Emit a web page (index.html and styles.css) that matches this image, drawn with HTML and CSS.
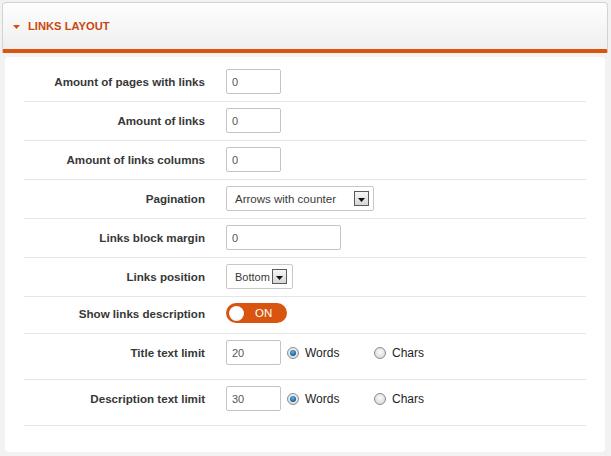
FILE: index.html
```html
<!DOCTYPE html>
<html>
<head>
<meta charset="utf-8">
<link rel="stylesheet" href="styles.css">
</head>
<body>
<div class="header">
  <svg class="caret" width="7" height="4" viewBox="0 0 7 4"><polygon points="0,0 7,0 3.5,4" fill="#d4500f"/></svg>
  <span class="title">LINKS LAYOUT</span>
</div>
<div class="panel">
  <div class="row">
    <label class="lbl">Amount of pages with links</label>
    <div class="input w55">0</div>
  </div>
  <div class="row">
    <label class="lbl">Amount of links</label>
    <div class="input w55">0</div>
  </div>
  <div class="row">
    <label class="lbl">Amount of links columns</label>
    <div class="input w55">0</div>
  </div>
  <div class="row">
    <label class="lbl">Pagination</label>
    <div class="select w148"><span class="sel-text">Arrows with counter</span><span class="sel-btn"><svg width="7" height="4" viewBox="0 0 7 4"><polygon points="0,0 7,0 3.5,4" fill="#111"/></svg></span></div>
  </div>
  <div class="row">
    <label class="lbl">Links block margin</label>
    <div class="input w115">0</div>
  </div>
  <div class="row">
    <label class="lbl">Links position</label>
    <div class="select w67"><span class="sel-text">Bottom</span><span class="sel-btn"><svg width="7" height="4" viewBox="0 0 7 4"><polygon points="0,0 7,0 3.5,4" fill="#111"/></svg></span></div>
  </div>
  <div class="row row-toggle">
    <label class="lbl">Show links description</label>
    <div class="toggle"><span class="knob"></span><span class="on">ON</span></div>
  </div>
  <div class="row row-radio">
    <label class="lbl">Title text limit</label>
    <div class="input w55">20</div>
    <div class="radio-group first"><span class="radio checked"></span><span class="rtext">Words</span></div>
    <div class="radio-group"><span class="radio"></span><span class="rtext">Chars</span></div>
  </div>
  <div class="row row-radio">
    <label class="lbl">Description text limit</label>
    <div class="input w55">30</div>
    <div class="radio-group first"><span class="radio checked"></span><span class="rtext">Words</span></div>
    <div class="radio-group"><span class="radio"></span><span class="rtext">Chars</span></div>
  </div>
</div>
</body>
</html>
```
FILE: styles.css
```css
* { box-sizing: border-box; }
body {
  margin: 0;
  background: #f2f2f2;
  font-family: "Liberation Sans", Arial, sans-serif;
  width: 611px;
  height: 456px;
  overflow: hidden;
}
.header {
  margin: 2px 3px 0 2px;
  height: 51px;
  border: 1px solid #d3d3d3;
  border-bottom: 4px solid #d9540e;
  border-radius: 4px 4px 2px 2px;
  background: linear-gradient(#fefefe, #efefef);
  display: flex;
  align-items: center;
  padding-left: 10px;
}
.caret { margin-right: 8px; margin-top: 1px; }
.title {
  color: #c9480e;
  font-weight: bold;
  font-size: 11.2px;
}
.panel {
  margin: 4px 6px 0 5px;
  background: #fff;
  border-radius: 4px;
  padding: 6px 19px 26px 19px;
}
.row {
  display: flex;
  align-items: center;
  padding: 6px 0 7px;
  border-bottom: 1px solid #e6e6e6;
}
.row-toggle { padding: 6px 0 10px; }
.row-radio { padding: 6px 0 14px; }
.lbl {
  width: 181px;
  margin-right: 21px;
  text-align: right;
  font-weight: bold;
  font-size: 11.6px;
  color: #373737;
}
.input {
  height: 25px;
  border: 1px solid #c4c4c4;
  border-radius: 2px;
  font-size: 11px;
  color: #555;
  padding-left: 5px;
  display: flex;
  align-items: center;
  background: #fff;
}
.w55 { width: 55px; }
.w115 { width: 115px; }
.select {
  height: 25px;
  border: 1px solid #c8c8c8;
  border-radius: 2px;
  display: flex;
  align-items: center;
  justify-content: space-between;
  padding: 0 4px 0 8px;
  font-size: 11.5px;
  color: #3a3a3a;
}
.w148 { width: 148px; }
.w67 { width: 67px; padding-right: 5px; font-size: 11px; }
.sel-btn {
  width: 15px;
  height: 15px;
  border: 1px solid #5a5a5a;
  background: linear-gradient(#f6f6f6, #d6d6d6);
  display: flex;
  align-items: center;
  justify-content: center;
  padding-top: 2px;
}
.toggle {
  width: 61px;
  height: 20px;
  border-radius: 10px;
  background: #d9540e;
  display: flex;
  align-items: center;
  padding-left: 3px;
}
.knob {
  width: 15px;
  height: 15px;
  border-radius: 50%;
  background: radial-gradient(circle at 50% 40%, #fff 55%, #e6e6e6);
  box-shadow: 0 0 1px rgba(0,0,0,0.3);
}
.on {
  color: #fff;
  font-size: 11.5px;
  margin-left: 11px;
}
.radio-group {
  display: flex;
  align-items: center;
  width: 87px;
}
.radio-group.first { margin-left: 6px; }
.radio {
  width: 12px;
  height: 12px;
  border-radius: 50%;
  border: 1px solid #8c8c8c;
  background: radial-gradient(circle at 50% 40%, #fafafa, #d2d2d2);
  position: relative;
}
.radio.checked::after {
  content: "";
  position: absolute;
  left: 2px;
  top: 2px;
  width: 6px;
  height: 6px;
  border-radius: 50%;
  background: radial-gradient(circle at 45% 35%, #5cb6f0, #0d5f9e 70%, #083e6b);
}
.rtext {
  margin-left: 6px;
  font-size: 12px;
  color: #1d1d2a;
}
```
